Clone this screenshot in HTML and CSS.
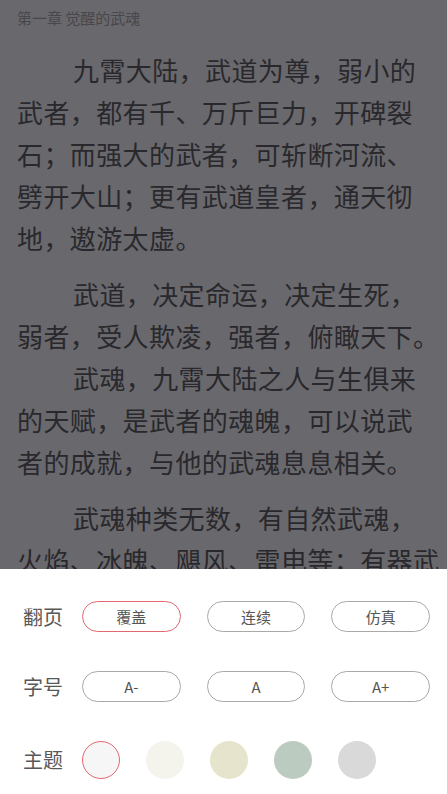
FILE: index.html
```html
<!DOCTYPE html>
<html lang="zh-CN">
<head>
<meta charset="utf-8">
<title>第一章 觉醒的武魂</title>
<link rel="stylesheet" href="styles.css">
</head>
<body>
<main class="reader">
  <div class="chapter-title">第一章 觉醒的武魂</div>
  <p class="para">
    <span class="line indent">九霄大陆，武道为尊，弱小的</span>
    <span class="line">武者，都有千、万斤巨力，开碑裂</span>
    <span class="line">石；而强大的武者，可斩断河流、</span>
    <span class="line">劈开大山；更有武道皇者，通天彻</span>
    <span class="line">地，遨游太虚。</span>
  </p>
  <p class="para">
    <span class="line indent">武道，决定命运，决定生死，</span>
    <span class="line">弱者，受人欺凌，强者，俯瞰天下。</span>
    <span class="line indent">武魂，九霄大陆之人与生俱来</span>
    <span class="line">的天赋，是武者的魂魄，可以说武</span>
    <span class="line">者的成就，与他的武魂息息相关。</span>
  </p>
  <p class="para">
    <span class="line indent">武魂种类无数，有自然武魂，</span>
    <span class="line">火焰、冰魄、飓风、雷电等；有器武</span>
  </p>
</main>

<section class="settings">
  <div class="row">
    <div class="label">翻页</div>
    <div class="options">
      <button class="pill selected">覆盖</button>
      <button class="pill">连续</button>
      <button class="pill">仿真</button>
    </div>
  </div>
  <div class="row">
    <div class="label">字号</div>
    <div class="options">
      <button class="pill">A-</button>
      <button class="pill">A</button>
      <button class="pill">A+</button>
    </div>
  </div>
  <div class="row theme-row">
    <div class="label">主题</div>
    <div class="swatches">
      <span class="swatch swatch-white selected"></span>
      <span class="swatch swatch-ivory"></span>
      <span class="swatch swatch-parchment"></span>
      <span class="swatch swatch-green"></span>
      <span class="swatch swatch-gray"></span>
    </div>
  </div>
</section>
</body>
</html>
```

FILE: styles.css
```css
* {
  box-sizing: border-box;
}

html, body {
  margin: 0;
  padding: 0;
  height: 100%;
}

body {
  background: #69686d;
  font-family: "Noto Sans CJK SC", "Noto Sans", sans-serif;
  overflow: hidden;
  position: relative;
}

.reader {
  padding: 8px 0 0 17px;
  color: #29282c;
}

.chapter-title {
  font-size: 15px;
  line-height: 20px;
  color: #48474c;
  margin-bottom: 21px;
}

.para {
  margin: 0 0 14px 0;
  font-size: 26px;
  letter-spacing: 0.4px;
  line-height: 42px;
}

.line {
  display: block;
  white-space: nowrap;
}

.indent {
  padding-left: 56px;
}

.settings {
  position: absolute;
  left: 0;
  right: 0;
  bottom: 0;
  height: 225px;
  background: #ffffff;
  padding: 32px 17px 0 23px;
  display: flex;
  flex-direction: column;
  gap: 39px;
}

.row {
  display: flex;
  align-items: center;
  height: 31px;
}

.theme-row {
  height: 38px;
}

.label {
  width: 59px;
  flex: none;
  font-size: 20px;
  color: #585858;
  line-height: 24px;
}

.options {
  flex: 1;
  display: grid;
  grid-template-columns: repeat(3, 1fr);
  column-gap: 26px;
}

.pill {
  height: 31px;
  border: 1px solid #a9a9a9;
  border-radius: 16px;
  background: #ffffff;
  font-family: "Noto Sans CJK SC", "Noto Sans", sans-serif;
  font-size: 15px;
  color: #555555;
  padding: 0;
  line-height: 29px;
}

.pill.selected {
  border-color: #e0686e;
}

.swatches {
  display: flex;
  gap: 26px;
}

.swatch {
  width: 38px;
  height: 38px;
  border-radius: 50%;
  display: block;
}

.swatch.selected {
  border: 1px solid #e0686e;
}

.swatch-white { background: #f7f6f7; }
.swatch-ivory { background: #f4f4ec; }
.swatch-parchment { background: #e7e4cd; }
.swatch-green { background: #bccbbf; }
.swatch-gray { background: #d9d9d9; }
```
